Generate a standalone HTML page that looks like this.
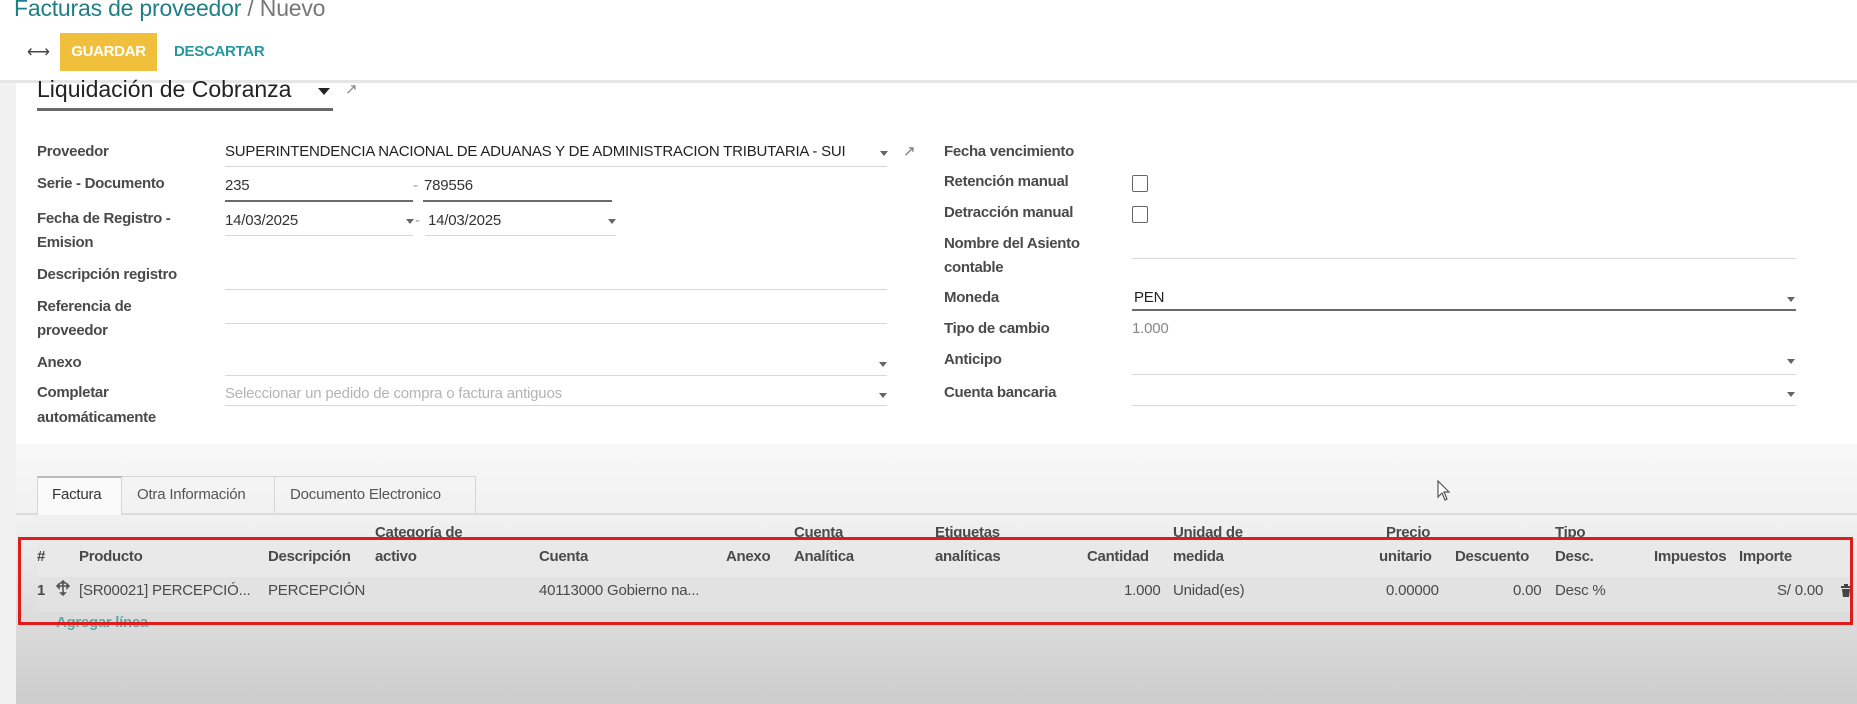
<!DOCTYPE html>
<html><head><meta charset="utf-8"><style>
*{margin:0;padding:0;box-sizing:border-box}
body{width:1857px;height:704px;overflow:hidden;position:relative;font-family:"Liberation Sans",sans-serif;background:#fff;color:#4c4c4c}
.a{position:absolute;white-space:nowrap}
.lb{font-size:15px;font-weight:bold;color:#4a4a4a;letter-spacing:-0.3px}
.v{font-size:15px;color:#333;letter-spacing:-0.2px}
.ln{position:absolute;height:1px;background:#d8d8d8}
.dk{position:absolute;height:2px;background:#6a6a6a}
.car{position:absolute;width:0;height:0;border-left:4px solid transparent;border-right:4px solid transparent;border-top:5px solid #666}
.cb{position:absolute;width:16px;height:17px;border:1.5px solid #666;border-radius:2px;background:#fff}
.th{font-size:15px;font-weight:bold;color:#4a4a4a;letter-spacing:-0.3px}
.td{font-size:15px;color:#4a4a4a;letter-spacing:-0.2px}
</style></head><body>
<div class="a" style="left:0;top:83px;width:16px;height:621px;background:#f1f1f1"></div>
<div class="a" style="left:16px;top:444px;width:1841px;height:260px;background:linear-gradient(#f8f8f8,#f0f0f0 80px,#d9d9d9 190px,#cdcdcd)"></div>
<!-- header -->
<div class="a" style="left:0;top:0;width:1857px;height:83px;background:#fff;border-bottom:3px solid #e6e6e6"></div>
<div class="a" style="left:14px;top:-5px;font-size:23px;color:#1f7f86;letter-spacing:-0.2px">Facturas de proveedor <span style="color:#777">/ Nuevo</span></div>
<div class="a" style="left:27px;top:42px;font-size:16px;color:#444">&#x27F7;</div>
<div class="a" style="left:60px;top:33px;width:97px;height:38px;background:#f0bf3c;color:#fff;font-size:15px;font-weight:bold;text-align:center;line-height:38px;letter-spacing:-0.3px">GUARDAR</div>
<div class="a" style="left:174px;top:43px;font-size:15px;font-weight:bold;color:#27969d;letter-spacing:-0.3px">DESCARTAR</div>
<!-- title -->
<div class="a" style="left:37px;top:76px;font-size:23px;color:#222">Liquidación de Cobranza</div>
<div class="car" style="left:318px;top:88px;border-left-width:6px;border-right-width:6px;border-top-width:7px;border-top-color:#222"></div>
<div class="a" style="left:345px;top:80px;font-size:15px;color:#888">&#x2197;</div>
<div class="dk" style="left:37px;top:108px;width:296px;height:3px"></div>
<!-- left fields -->
<div class="a lb" style="left:37px;top:143px">Proveedor</div>
<div class="a v" style="left:225px;top:143px;color:#222">SUPERINTENDENCIA NACIONAL DE ADUANAS Y DE ADMINISTRACION TRIBUTARIA - SUI</div>
<div class="car" style="left:880px;top:151px"></div>
<div class="ln" style="left:225px;top:166px;width:662px"></div>
<div class="a" style="left:903px;top:142px;font-size:15px;color:#777">&#x2197;</div>
<div class="a lb" style="left:37px;top:175px">Serie - Documento</div>
<div class="a v" style="left:225px;top:177px">235</div>
<div class="a v" style="left:413px;top:177px;color:#999">-</div>
<div class="a v" style="left:424px;top:177px">789556</div>
<div class="dk" style="left:225px;top:200px;width:188px"></div>
<div class="dk" style="left:423px;top:200px;width:189px"></div>
<div class="a lb" style="left:37px;top:210px">Fecha de Registro -</div>
<div class="a lb" style="left:37px;top:234px">Emision</div>
<div class="a v" style="left:225px;top:212px">14/03/2025</div>
<div class="car" style="left:406px;top:219px"></div>
<div class="a v" style="left:415px;top:212px;color:#999">-</div>
<div class="a v" style="left:428px;top:212px">14/03/2025</div>
<div class="car" style="left:608px;top:219px"></div>
<div class="ln" style="left:225px;top:235px;width:188px"></div>
<div class="ln" style="left:425px;top:235px;width:191px"></div>
<div class="a lb" style="left:37px;top:266px">Descripción registro</div>
<div class="ln" style="left:225px;top:289px;width:662px"></div>
<div class="a lb" style="left:37px;top:298px">Referencia de</div>
<div class="a lb" style="left:37px;top:322px">proveedor</div>
<div class="ln" style="left:225px;top:323px;width:662px"></div>
<div class="a lb" style="left:37px;top:354px">Anexo</div>
<div class="car" style="left:879px;top:362px"></div>
<div class="ln" style="left:225px;top:375px;width:662px"></div>
<div class="a lb" style="left:37px;top:384px">Completar</div>
<div class="a lb" style="left:37px;top:409px">automáticamente</div>
<div class="a v" style="left:225px;top:385px;color:#b4b4b4">Seleccionar un pedido de compra o factura antiguos</div>
<div class="car" style="left:879px;top:393px"></div>
<div class="ln" style="left:225px;top:405px;width:662px"></div>
<!-- right fields -->
<div class="a lb" style="left:944px;top:143px">Fecha vencimiento</div>
<div class="a lb" style="left:944px;top:173px">Retención manual</div>
<div class="cb" style="left:1132px;top:175px"></div>
<div class="a lb" style="left:944px;top:204px">Detracción manual</div>
<div class="cb" style="left:1132px;top:206px"></div>
<div class="a lb" style="left:944px;top:235px">Nombre del Asiento</div>
<div class="a lb" style="left:944px;top:259px">contable</div>
<div class="ln" style="left:1132px;top:258px;width:664px"></div>
<div class="a lb" style="left:944px;top:289px">Moneda</div>
<div class="a v" style="left:1134px;top:289px;color:#222">PEN</div>
<div class="car" style="left:1787px;top:297px"></div>
<div class="dk" style="left:1132px;top:309px;width:664px"></div>
<div class="a lb" style="left:944px;top:320px">Tipo de cambio</div>
<div class="a v" style="left:1132px;top:320px;color:#888">1.000</div>
<div class="a lb" style="left:944px;top:351px">Anticipo</div>
<div class="car" style="left:1787px;top:359px"></div>
<div class="ln" style="left:1132px;top:374px;width:664px"></div>
<div class="a lb" style="left:944px;top:384px">Cuenta bancaria</div>
<div class="car" style="left:1787px;top:392px"></div>
<div class="ln" style="left:1132px;top:405px;width:664px"></div>
<!-- tabs -->
<div class="a" style="left:16px;top:513px;width:1841px;height:2px;background:#dcdcdc"></div>
<div class="a" style="left:37px;top:476px;width:85px;height:39px;background:#fafafa;border:1px solid #d6d6d6;border-top:2px solid #bbb;border-bottom:none"></div>
<div class="a" style="left:122px;top:476px;width:153px;height:38px;border:1px solid #d6d6d6;border-left:none;border-bottom:none"></div>
<div class="a" style="left:275px;top:476px;width:201px;height:38px;border:1px solid #d6d6d6;border-left:none;border-bottom:none"></div>
<div class="a td" style="left:52px;top:486px;color:#333">Factura</div>
<div class="a td" style="left:137px;top:486px;color:#555">Otra Información</div>
<div class="a td" style="left:290px;top:486px;color:#555">Documento Electronico</div>
<svg class="a" style="left:1437px;top:480px" width="14" height="22" viewBox="0 0 14 22"><path d="M1 1 L1 17 L5 13 L8 20 L10 19 L7 12 L12 12 Z" fill="#fff" stroke="#555" stroke-width="1.2"/></svg>
<!-- table -->
<div class="a" style="left:37px;top:540px;width:1816px;height:37px;background:#e9e9e9"></div>
<div class="a" style="left:37px;top:577px;width:1816px;height:34px;background:#e2e2e2"></div>
<div class="a th" style="left:375px;top:524px">Categoría de</div>
<div class="a th" style="left:794px;top:524px">Cuenta</div>
<div class="a th" style="left:935px;top:524px">Etiquetas</div>
<div class="a th" style="left:1173px;top:524px">Unidad de</div>
<div class="a th" style="left:1386px;top:524px">Precio</div>
<div class="a th" style="left:1555px;top:524px">Tipo</div>
<div class="a th" style="left:37px;top:548px">#</div>
<div class="a th" style="left:79px;top:548px">Producto</div>
<div class="a th" style="left:268px;top:548px">Descripción</div>
<div class="a th" style="left:375px;top:548px">activo</div>
<div class="a th" style="left:539px;top:548px">Cuenta</div>
<div class="a th" style="left:726px;top:548px">Anexo</div>
<div class="a th" style="left:794px;top:548px">Analítica</div>
<div class="a th" style="left:935px;top:548px">analíticas</div>
<div class="a th" style="left:1087px;top:548px">Cantidad</div>
<div class="a th" style="left:1173px;top:548px">medida</div>
<div class="a th" style="left:1379px;top:548px">unitario</div>
<div class="a th" style="left:1455px;top:548px">Descuento</div>
<div class="a th" style="left:1555px;top:548px">Desc.</div>
<div class="a th" style="left:1654px;top:548px">Impuestos</div>
<div class="a th" style="left:1739px;top:548px">Importe</div>
<div class="a th" style="left:37px;top:582px">1</div>
<svg class="a" style="left:56px;top:580px" width="14" height="16" viewBox="0 0 14 16"><path d="M7 1 V15 M2 6 H12 M7 1 L5 3 H9 Z M7 15 L5 13 H9 Z M1 6 L3 4 V8 Z M13 6 L11 4 V8 Z" stroke="#555" stroke-width="1.6" fill="#555"/></svg>
<div class="a td" style="left:79px;top:582px">[SR00021] PERCEPCIÓ...</div>
<div class="a td" style="left:268px;top:582px">PERCEPCIÓN</div>
<div class="a td" style="left:539px;top:582px">40113000 Gobierno na...</div>
<div class="a td" style="left:1124px;top:582px">1.000</div>
<div class="a td" style="left:1173px;top:582px">Unidad(es)</div>
<div class="a td" style="left:1386px;top:582px">0.00000</div>
<div class="a td" style="left:1513px;top:582px">0.00</div>
<div class="a td" style="left:1555px;top:582px">Desc %</div>
<div class="a td" style="left:1777px;top:582px">S/ 0.00</div>
<svg class="a" style="left:1840px;top:583px" width="12" height="15" viewBox="0 0 12 15"><path d="M4 1 H8 V3 H11 V5 H1 V3 H4 Z M2 6 H10 L9 14 H3 Z" fill="#444"/></svg>
<div class="a" style="left:56px;top:614px;font-size:15px;font-weight:bold;color:#5aa8a8;letter-spacing:-0.3px">Agregar línea</div>
<div class="a" style="left:18px;top:537px;width:1835px;height:88px;border:3px solid #e01b1b"></div>
</body></html>
